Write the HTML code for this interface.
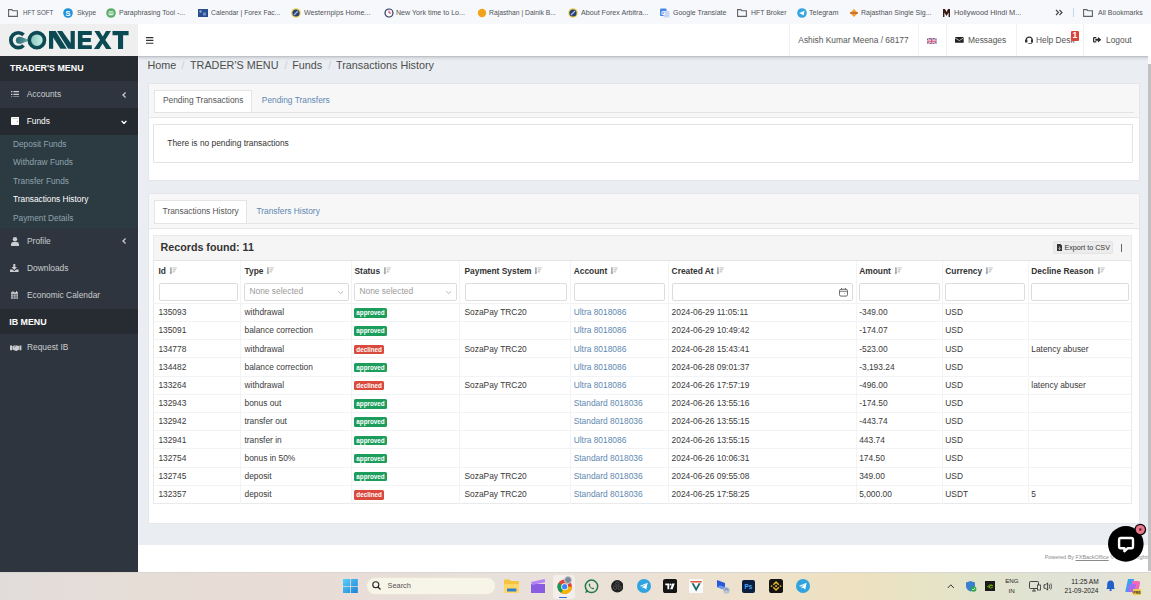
<!DOCTYPE html>
<html><head><meta charset="utf-8"><style>*{box-sizing:border-box;margin:0;padding:0}
html,body{width:1151px;height:600px;overflow:hidden}
body{position:relative;font-family:"Liberation Sans",sans-serif;background:#e9ecf0;color:#333}
.abs{position:absolute}
#bm{left:0;top:0;width:1151px;height:24px;background:#f7f8fc;color:#505357;font-size:7.4px;white-space:nowrap}
#bm span{position:absolute;top:8px;line-height:9px;transform-origin:0 50%}
#bm svg{position:absolute}
#logo{left:0;top:24px;width:138px;height:32px;background:#efefef}
#nav{left:138px;top:24px;width:1013px;height:32px;background:#fff;font-size:8.4px;color:#555}
#nav .it{position:absolute;top:0;height:32px;border-left:1px solid #eef0f2}
#side{left:0;top:56px;width:138px;height:516px;background:#2f353e;color:#c9cdd1;font-size:8.4px}
#content{left:138px;top:56px;width:1010px;height:489px;background:#e9ecf0}
#sb{left:1148px;top:56px;width:3px;height:516px;background:#fbfbfb}
#sbt{left:1148.4px;top:64px;width:2.6px;height:507px;background:#c1c1c1}
#footer{left:138px;top:545px;width:1010px;height:27px;background:#fff}
#task{left:0;top:572px;width:1151px;height:28px;background:linear-gradient(90deg,#e6dcd8 0%,#ece4dc 30%,#efe7d6 60%,#ede6d3 100%)}
</style></head><body>
<div id="bm" class="abs"><svg style="left:7.8px;top:8.5px" width="10" height="8" viewBox="0 0 10 8"><path d="M.6 .6h3.2l1 1.1h4.6v5.7H.6z" fill="none" stroke="#5f6368" stroke-width="1.1"/></svg><span style="left:22.6px;transform:scaleX(0.844)">HFT SOFT</span><svg style="left:63.4px;top:7.5px" width="10" height="10" viewBox="0 0 10 10"><circle cx="5" cy="5" r="4.8" fill="#1c92d8"/><text x="5" y="7.8" font-size="7.5" font-weight="bold" fill="#fff" text-anchor="middle" font-family="Liberation Sans">S</text></svg><span style="left:76.5px;transform:scaleX(0.929)">Skype</span><svg style="left:105.5px;top:7.5px" width="10" height="10" viewBox="0 0 10 10"><circle cx="5" cy="5" r="4.8" fill="#5cae6a"/><rect x="2.6" y="3.2" width="4.8" height="4" rx="1" fill="#e6f2e6"/><circle cx="4" cy="5" r=".7" fill="#3b8a4a"/><circle cx="6" cy="5" r=".7" fill="#3b8a4a"/></svg><span style="left:118.7px;transform:scaleX(0.944)">Paraphrasing Tool -...</span><svg style="left:198px;top:8px" width="10" height="9" viewBox="0 0 10 9"><rect x="0" y="1" width="10" height="8" fill="#2a4f8f"/><rect x="1.5" y="2.5" width="2" height="2" fill="#9bb7e0"/><rect x="5" y="4.5" width="3" height="3" fill="#6d8fc8"/></svg><span style="left:211px;transform:scaleX(0.920)">Calendar | Forex Fac...</span><svg style="left:291px;top:7.5px" width="10" height="10" viewBox="0 0 10 10"><circle cx="5" cy="5" r="4.8" fill="#e8d35a"/><circle cx="5" cy="5" r="3.6" fill="#2d3f6e"/><path d="M3 7 L7 3" stroke="#9fc0ef" stroke-width="1.2"/></svg><span style="left:303.5px;transform:scaleX(0.964)">Westernpips Home...</span><svg style="left:383.5px;top:7.5px" width="10" height="10" viewBox="0 0 10 10"><circle cx="5" cy="5" r="4" fill="none" stroke="#2f3a5a" stroke-width="1.2"/><path d="M5 2.6V5h2" fill="none" stroke="#d8344a" stroke-width="1"/></svg><span style="left:396px;transform:scaleX(0.959)">New York time to Lo...</span><svg style="left:476.5px;top:7.5px" width="10" height="10" viewBox="0 0 10 10"><circle cx="5" cy="5" r="4.2" fill="#f2a31b"/></svg><span style="left:489px;transform:scaleX(0.917)">Rajasthan | Dainik B...</span><svg style="left:567.5px;top:7.5px" width="10" height="10" viewBox="0 0 10 10"><circle cx="5" cy="5" r="4.8" fill="#e8d35a"/><circle cx="5" cy="5" r="3.6" fill="#2d3f6e"/><path d="M3 7 L7 3" stroke="#9fc0ef" stroke-width="1.2"/></svg><span style="left:581px;transform:scaleX(0.965)">About Forex Arbitra...</span><svg style="left:660px;top:7.5px" width="10" height="10" viewBox="0 0 10 10"><rect x="0" y="0.5" width="6.5" height="7.5" rx="1" fill="#4a86e8"/><rect x="3.5" y="3" width="6" height="6.5" rx="1" fill="#c6d7f5"/><text x="3.2" y="6.5" font-size="5.5" font-weight="bold" fill="#fff" text-anchor="middle" font-family="Liberation Sans">G</text></svg><span style="left:672.5px;transform:scaleX(0.949)">Google Translate</span><svg style="left:736.5px;top:8.5px" width="10" height="8" viewBox="0 0 10 8"><path d="M.6 .6h3.2l1 1.1h4.6v5.7H.6z" fill="none" stroke="#5f6368" stroke-width="1.1"/></svg><span style="left:751px;transform:scaleX(0.932)">HFT Broker</span><svg style="left:796.5px;top:7.5px" width="10" height="10" viewBox="0 0 10 10"><circle cx="5" cy="5" r="4.8" fill="#37a6de"/><path d="M2.2 5 L7.6 2.8 L6.6 7.6 L4.6 6.2 Z" fill="#fff"/></svg><span style="left:809px;transform:scaleX(0.969)">Telegram</span><svg style="left:849px;top:7.5px" width="10" height="10" viewBox="0 0 10 10"><path d="M5 1 L9 5 L5 9 L1 5Z" fill="#f0a030"/><rect x="1" y="4.3" width="8" height="1.4" fill="#c0602a"/></svg><span style="left:861px;transform:scaleX(0.942)">Rajasthan Single Sig...</span><svg style="left:941.5px;top:7.5px" width="9" height="10" viewBox="0 0 9 10"><path d="M1 1h2l1.5 3L6 1h2v8H6.6V4.5L4.5 8 2.4 4.5V9H1z" fill="#3a1a14"/></svg><span style="left:954px;transform:scaleX(1.001)">Hollywood Hindi M...</span><svg style="left:1055px;top:9px" width="9" height="7" viewBox="0 0 9 7"><path d="M1 1l2.5 2.5L1 6M4.5 1L7 3.5 4.5 6" fill="none" stroke="#3c4043" stroke-width="1.1"/></svg><div style="position:absolute;left:1072.5px;top:8px;width:1px;height:9px;background:#c8d4ea"></div><svg style="left:1082.9px;top:8.5px" width="10" height="8" viewBox="0 0 10 8"><path d="M.6 .6h3.2l1 1.1h4.6v5.7H.6z" fill="none" stroke="#5f6368" stroke-width="1.1"/></svg><span style="left:1097.9px;transform:scaleX(0.947)">All Bookmarks</span></div>
<div id="logo" class="abs"><svg width="138" height="32" viewBox="0 24 138 32" style="position:absolute;left:0;top:0">
<defs><linearGradient id="lg" gradientUnits="userSpaceOnUse" x1="15.5" x2="43" y1="0" y2="0"><stop offset="0" stop-color="#2a6a72"/><stop offset=".3" stop-color="#4d8d90"/><stop offset=".55" stop-color="#8cc7bf"/><stop offset="1" stop-color="#c4eee3"/></linearGradient></defs>
<path d="M23.57 34.93A7.45 7.45 0 1 0 23.57 45.47" fill="none" stroke="#0b4a53" stroke-width="3.7"/>
<circle cx="19.4" cy="40.2" r="3.5" fill="url(#lg)"/>
<path d="M19.4 36.7 C23.5 36.9 26 39.3 28.5 39.4 L33 37 L33 43.4 L28.5 41 C26 41.1 23.5 43.5 19.4 43.7Z" fill="url(#lg)"/>
<circle cx="36.9" cy="40.2" r="6" fill="url(#lg)"/>
<circle cx="36.9" cy="40.2" r="7.6" fill="none" stroke="#0b4a53" stroke-width="3.6"/>
<rect x="49" y="31" width="4.2" height="17.8" fill="#0b4a53"/>
<polygon points="49,31 55.6,31 66.8,48.8 60.4,48.8" fill="#0b4a53"/>
<polygon points="57,31 62.2,31 74.8,48.8 68.2,48.8" fill="#0b4a53"/>
<rect x="70.6" y="31" width="4.2" height="17.8" fill="#0b4a53"/>
<path d="M77.9 31.1H91.8V34.9H82.5V38H90.8V41.9H82.5V45.2H91.8V49H77.9Z" fill="#0b4a53"/>
<polygon points="94.4,31.1 99.4,31.1 102.8,36.6 106,31.1 110.9,31.1 105.3,39.9 111.6,49 106.1,49 102.6,43.4 99.2,49 93.9,49 100.1,39.9" fill="#0b4a53"/>
<path d="M112.5 31.1H128.6V35.2H123.1V49H118V35.2H112.5Z" fill="#0b4a53"/>
</svg></div>
<div id="nav" class="abs"><svg style="position:absolute;left:8.3px;top:13px" width="8" height="7" viewBox="0 0 8 7"><path d="M0 .6H7.4M0 3.4H7.4M0 6.2H7.4" stroke="#333" stroke-width="1.1"/></svg><div style="position:absolute;left:650.6px;top:0;width:1px;height:32px;background:#eff1f3"></div><div style="position:absolute;left:779.6px;top:0;width:1px;height:32px;background:#eff1f3"></div><div style="position:absolute;left:808.3px;top:0;width:1px;height:32px;background:#eff1f3"></div><div style="position:absolute;left:877.7px;top:0;width:1px;height:32px;background:#eff1f3"></div><div style="position:absolute;left:945.4px;top:0;width:1px;height:32px;background:#eff1f3"></div><span style="position:absolute;left:660.3px;top:12.00px;line-height:9.6px;white-space:nowrap">Ashish Kumar Meena / 68177</span><svg style="position:absolute;left:789.2px;top:13.6px" width="9.5" height="6.5" viewBox="0 0 60 40"><rect width="60" height="40" fill="#3b4b9a"/><path d="M0 0L60 40M60 0L0 40" stroke="#fff" stroke-width="8"/><path d="M0 0L60 40M60 0L0 40" stroke="#d9456a" stroke-width="3"/><path d="M30 0V40M0 20H60" stroke="#fff" stroke-width="12"/><path d="M30 0V40M0 20H60" stroke="#d9456a" stroke-width="7"/></svg><svg style="position:absolute;left:817.4px;top:13.1px" width="8.7" height="5.8" viewBox="0 0 8.7 5.8"><rect width="8.7" height="5.8" rx=".5" fill="#222"/><path d="M0 .8L4.35 3.6L8.7 .8" fill="none" stroke="#fff" stroke-width=".7"/></svg><span style="position:absolute;left:830.0px;top:12.00px;line-height:9.6px;white-space:nowrap">Messages</span><svg style="position:absolute;left:887.1px;top:11.9px" width="8.4" height="8.4" viewBox="0 0 16 16"><path d="M2.2 9.5V7.8A5.8 5.8 0 0 1 13.8 7.8V9.5" fill="none" stroke="#333" stroke-width="2.2"/><path d="M0 8.5Q0 6.8 1.8 6.8H4.6V12.6H1.8Q0 12.6 0 10.9Z M16 8.5Q16 6.8 14.2 6.8H11.4V12.6H14.2Q16 12.6 16 10.9Z" fill="#333"/><path d="M13.6 12Q13.2 15 9.5 15H7.5" fill="none" stroke="#333" stroke-width="1.6"/><rect x="6" y="13.8" width="3.4" height="2.2" rx="1" fill="#333"/></svg><span style="position:absolute;left:898.0px;top:12.00px;line-height:9.6px;white-space:nowrap">Help Desk</span><div style="position:absolute;left:933.2px;top:7.2px;width:7.4px;height:9.4px;background:#d8453b;border-radius:1px;color:#fff;font-weight:bold;font-size:8.6px;line-height:9.8px;text-align:center">1</div><svg style="position:absolute;left:954.7px;top:13.3px" width="8.6" height="5.6" viewBox="0 0 17 11"><path d="M6.5 1.2H2.6Q1.2 1.2 1.2 2.6V8.4Q1.2 9.8 2.6 9.8H6.5" fill="none" stroke="#2a2a2a" stroke-width="2.4"/><path d="M4.6 3.6H9.8V0L16.6 5.5L9.8 11V7.4H4.6Z" fill="#2a2a2a"/></svg><span style="position:absolute;left:968.0px;top:12.00px;line-height:9.6px;white-space:nowrap">Logout</span></div>
<div id="side" class="abs"><div style="position:absolute;left:0;top:0;width:138px;height:25px;background:#272b32"></div><span style="position:absolute;left:10px;top:7.15px;line-height:10.23px;font-size:8.9px;color:#fff;white-space:nowrap;font-weight:bold">TRADER'S MENU</span><svg style="position:absolute;left:10.8px;top:34.8px" width="8.4" height="6.7" viewBox="0 0 8.4 6.7"><path d="M0 .7H1.4M2.4 .7H8.4M0 3.35H1.4M2.4 3.35H8.4M0 6H1.4M2.4 6H8.4" stroke="#c9cdd1" stroke-width="1.15"/></svg><span style="position:absolute;left:26.7px;top:34.10px;line-height:9.66px;font-size:8.4px;color:#c9cdd1;white-space:nowrap">Accounts</span><svg style="position:absolute;left:121.8px;top:35.5px" width="4.5" height="6" viewBox="0 0 4.5 6"><path d="M3.6 .6L1 3L3.6 5.4" fill="none" stroke="#c9cdd1" stroke-width="1.3"/></svg><div style="position:absolute;left:0;top:52.0px;width:138px;height:27px;background:#252a30"></div><svg style="position:absolute;left:10.8px;top:61.0px" width="8.4" height="7.9" viewBox="0 0 8.4 7.9"><rect x="0" y="0" width="8.4" height="7.9" rx=".9" fill="#fff"/><rect x=".9" y="1.1" width="6.6" height=".8" fill="#c9c9c9"/><circle cx="6.6" cy="4.6" r=".5" fill="#888"/></svg><span style="position:absolute;left:26.7px;top:61.00px;line-height:9.66px;font-size:8.4px;color:#fff;white-space:nowrap">Funds</span><svg style="position:absolute;left:121px;top:63.5px" width="6" height="4.5" viewBox="0 0 6 4.5"><path d="M.6 .9L3 3.5L5.4 .9" fill="none" stroke="#fff" stroke-width="1.4"/></svg><div style="position:absolute;left:0;top:79.0px;width:138px;height:93.2px;background:#2c3a42"></div><span style="position:absolute;left:13px;top:83.69px;line-height:9.54px;font-size:8.3px;color:#8fa4ad;white-space:nowrap">Deposit Funds</span><span style="position:absolute;left:13px;top:102.29px;line-height:9.54px;font-size:8.3px;color:#8fa4ad;white-space:nowrap">Withdraw Funds</span><span style="position:absolute;left:13px;top:120.69px;line-height:9.54px;font-size:8.3px;color:#8fa4ad;white-space:nowrap">Transfer Funds</span><span style="position:absolute;left:13px;top:139.29px;line-height:9.54px;font-size:8.3px;color:#fff;white-space:nowrap">Transactions History</span><span style="position:absolute;left:13px;top:157.79px;line-height:9.54px;font-size:8.3px;color:#8fa4ad;white-space:nowrap">Payment Details</span><svg style="position:absolute;left:10.6px;top:181.0px" width="8" height="9" viewBox="0 0 8 9"><circle cx="4" cy="2.3" r="2.2" fill="#c9cdd1"/><path d="M0 9V7.2Q0 4.9 2.3 4.9H5.7Q8 4.9 8 7.2V9Z" fill="#c9cdd1"/></svg><span style="position:absolute;left:27px;top:180.90px;line-height:9.66px;font-size:8.4px;color:#c9cdd1;white-space:nowrap">Profile</span><svg style="position:absolute;left:121.8px;top:182.3px" width="4.5" height="6" viewBox="0 0 4.5 6"><path d="M3.6 .6L1 3L3.6 5.4" fill="none" stroke="#c9cdd1" stroke-width="1.3"/></svg><svg style="position:absolute;left:10.4px;top:207.6px" width="8.6" height="8.8" viewBox="0 0 8.6 8.8"><path d="M3.3 0H5.3V3H7L4.3 5.9L1.6 3H3.3Z" fill="#c9cdd1"/><path d="M0 5.6H2.6L4.3 7.3L6 5.6H8.6V8.8H0Z" fill="#c9cdd1"/></svg><span style="position:absolute;left:27px;top:207.80px;line-height:9.66px;font-size:8.4px;color:#c9cdd1;white-space:nowrap">Downloads</span><svg style="position:absolute;left:11.1px;top:234.7px" width="7.4" height="8.8" viewBox="0 0 7.4 8.8"><rect x="0" y="1.2" width="7.4" height="7.6" fill="#c9cdd1"/><rect x="1.4" y="0" width="1" height="2" fill="#c9cdd1"/><rect x="5" y="0" width="1" height="2" fill="#c9cdd1"/><path d="M0 3.3H7.4M0 5.2H7.4M0 7H7.4M2.4 3V8.8M5 3V8.8" stroke="#2f353e" stroke-width=".55"/></svg><span style="position:absolute;left:27px;top:235.10px;line-height:9.66px;font-size:8.4px;color:#c9cdd1;white-space:nowrap">Economic Calendar</span><div style="position:absolute;left:0;top:252.8px;width:138px;height:25.5px;background:#272b32"></div><span style="position:absolute;left:9.2px;top:260.65px;line-height:10.23px;font-size:8.9px;color:#fff;white-space:nowrap;font-weight:bold">IB MENU</span><svg style="position:absolute;left:10.4px;top:289.0px" width="11.4" height="6" viewBox="0 0 11.4 6"><path d="M0 .6H2V5.2H0Z M9.4 .6H11.4V5.2H9.4Z" fill="#c9cdd1"/><path d="M2.4 1Q4 0 5.7 .6Q7.4 0 9 1V4.6L6.6 6L4.8 5.4L2.4 4.6Z" fill="#c9cdd1"/><path d="M4 2.2L5.6 1.4" stroke="#2f353e" stroke-width=".6"/></svg><span style="position:absolute;left:27px;top:287.20px;line-height:9.66px;font-size:8.4px;color:#c9cdd1;white-space:nowrap">Request IB</span></div>
<div style="position:absolute;left:138px;top:56px;width:1010.00px;height:489.00px;background:#eaedf1"></div>
<div style="position:absolute;left:138px;top:56px;width:1.30px;height:489.00px;background:#f4f6f9"></div>
<div style="position:absolute;left:138px;top:56px;width:1010.00px;height:5.00px;background:linear-gradient(rgba(60,62,70,.30),rgba(60,62,70,.13) 30%,rgba(60,62,70,.04) 65%,rgba(60,62,70,0))"></div>
<div style="position:absolute;left:147.4px;top:59.23px;line-height:12.06px;font-size:10.8px;color:#4d4d4d;white-space:nowrap;">Home</div>
<div style="position:absolute;left:181.5px;top:59.23px;line-height:12.06px;font-size:10.8px;color:#cfcfcf;white-space:nowrap;">/</div>
<div style="position:absolute;left:190px;top:59.23px;line-height:12.06px;font-size:10.8px;color:#4d4d4d;white-space:nowrap;">TRADER'S MENU</div>
<div style="position:absolute;left:284.4px;top:59.23px;line-height:12.06px;font-size:10.8px;color:#cfcfcf;white-space:nowrap;">/</div>
<div style="position:absolute;left:292.2px;top:59.23px;line-height:12.06px;font-size:10.8px;color:#4d4d4d;white-space:nowrap;">Funds</div>
<div style="position:absolute;left:328.3px;top:59.23px;line-height:12.06px;font-size:10.8px;color:#cfcfcf;white-space:nowrap;">/</div>
<div style="position:absolute;left:336px;top:59.23px;line-height:12.06px;font-size:10.8px;color:#4d4d4d;white-space:nowrap;">Transactions History</div>
<div style="position:absolute;left:148px;top:83px;width:991.60px;height:98.00px;background:#fff;border:1px solid #e4e6e9"></div>
<div style="position:absolute;left:149px;top:84px;width:989.60px;height:33.30px;background:#f7f7f8"></div>
<div style="position:absolute;left:149px;top:117.3px;width:989.60px;height:1.00px;background:#e6e7e9"></div>
<div style="position:absolute;left:153.5px;top:111.5px;width:980.90px;height:1.00px;background:#e3e4e6"></div>
<div style="position:absolute;left:153.5px;top:89.6px;width:98.70px;height:22.90px;background:#fff;border:1px solid #e3e4e6;border-bottom:none;border-radius:1px 1px 0 0"></div>
<div style="position:absolute;left:162.9px;top:95.90px;line-height:9.38px;font-size:8.4px;color:#555;white-space:nowrap;">Pending Transactions</div>
<div style="position:absolute;left:261.8px;top:95.90px;line-height:9.38px;font-size:8.4px;color:#5e88b1;white-space:nowrap;">Pending Transfers</div>
<div style="position:absolute;left:153.3px;top:124.4px;width:979.40px;height:38.50px;background:#fff;border:1px solid #e2e3e5;border-radius:1px"></div>
<div style="position:absolute;left:167.3px;top:138.90px;line-height:9.38px;font-size:8.4px;color:#333;white-space:nowrap;">There is no pending transactions</div>
<div style="position:absolute;left:148px;top:193.2px;width:991.60px;height:330.80px;background:#fff;border:1px solid #e4e6e9"></div>
<div style="position:absolute;left:149px;top:194.2px;width:989.60px;height:33.80px;background:#f7f7f8"></div>
<div style="position:absolute;left:149px;top:228px;width:989.60px;height:1.00px;background:#e6e7e9"></div>
<div style="position:absolute;left:153.5px;top:222.5px;width:980.90px;height:1.00px;background:#e3e4e6"></div>
<div style="position:absolute;left:153.5px;top:200.3px;width:93.80px;height:23.20px;background:#fff;border:1px solid #e3e4e6;border-bottom:none;border-radius:1px 1px 0 0"></div>
<div style="position:absolute;left:162.6px;top:206.70px;line-height:9.38px;font-size:8.4px;color:#555;white-space:nowrap;">Transactions History</div>
<div style="position:absolute;left:256.4px;top:206.70px;line-height:9.38px;font-size:8.4px;color:#5e88b1;white-space:nowrap;">Transfers History</div>
<div style="position:absolute;left:153.4px;top:235px;width:978.80px;height:269.40px;background:#fff;border:1px solid #e9eaeb"></div>
<div style="position:absolute;left:154.4px;top:236px;width:976.80px;height:25.00px;background:#f5f5f6;border-bottom:1px solid #e3e4e6"></div>
<div style="position:absolute;left:160.6px;top:241.52px;line-height:11.95px;font-size:10.7px;color:#333;white-space:nowrap;font-weight:bold;">Records found: 11</div>
<div style="position:absolute;left:1053.3px;top:241.3px;width:59.60px;height:12.90px;background:#ececed;border:1px solid #e4e4e4;border-radius:2px"></div>
<svg style="position:absolute;left:1056.8px;top:243.6px" width="5.2" height="7" viewBox="0 0 5.2 7"><path d="M0 0H3.4L5.2 1.8V7H0Z" fill="#333"/><path d="M2.6 2.6V5.4M1.5 4.4L2.6 5.6L3.7 4.4" fill="none" stroke="#fff" stroke-width=".6"/></svg>
<div style="position:absolute;left:1064.4px;top:244.08px;line-height:8.04px;font-size:7.2px;color:#333;white-space:nowrap;">Export to CSV</div>
<div style="position:absolute;left:1120.7px;top:244.4px;width:1.20px;height:7.30px;background:#666"></div>
<div style="position:absolute;left:240.2px;top:261px;width:1.00px;height:242.80px;background:#f2f3f4"></div>
<div style="position:absolute;left:351.1px;top:261px;width:1.00px;height:242.80px;background:#f2f3f4"></div>
<div style="position:absolute;left:459.2px;top:261px;width:1.00px;height:242.80px;background:#f2f3f4"></div>
<div style="position:absolute;left:569.5px;top:261px;width:1.00px;height:242.80px;background:#f2f3f4"></div>
<div style="position:absolute;left:667.7px;top:261px;width:1.00px;height:242.80px;background:#f2f3f4"></div>
<div style="position:absolute;left:855.9px;top:261px;width:1.00px;height:242.80px;background:#f2f3f4"></div>
<div style="position:absolute;left:942.1px;top:261px;width:1.00px;height:242.80px;background:#f2f3f4"></div>
<div style="position:absolute;left:1027.7px;top:261px;width:1.00px;height:242.80px;background:#f2f3f4"></div>
<div style="position:absolute;left:158.4px;top:267.10px;line-height:9.38px;font-size:8.4px;color:#333;white-space:nowrap;font-weight:bold;">Id</div>
<svg style="position:absolute;left:168.5px;top:267px" width="8.5" height="7.6" viewBox="0 0 8.5 7.6"><path d="M1.9 0.2V6.8" stroke="#a5a5a5" stroke-width="1.6"/><path d="M.4 5.6L1.9 7.5L3.4 5.6Z" fill="#a5a5a5"/><path d="M3.6 .2H8.3L7.6 1.6H3.6ZM3.6 2.1H7.3L6.7 3.5H3.6ZM3.6 4H6.3L5.8 5.4H3.6Z" fill="#cfcfcf"/></svg>
<div style="position:absolute;left:244.5px;top:267.10px;line-height:9.38px;font-size:8.4px;color:#333;white-space:nowrap;font-weight:bold;">Type</div>
<svg style="position:absolute;left:266.1px;top:267px" width="8.5" height="7.6" viewBox="0 0 8.5 7.6"><path d="M1.9 0.2V6.8" stroke="#a5a5a5" stroke-width="1.6"/><path d="M.4 5.6L1.9 7.5L3.4 5.6Z" fill="#a5a5a5"/><path d="M3.6 .2H8.3L7.6 1.6H3.6ZM3.6 2.1H7.3L6.7 3.5H3.6ZM3.6 4H6.3L5.8 5.4H3.6Z" fill="#cfcfcf"/></svg>
<div style="position:absolute;left:354.5px;top:267.10px;line-height:9.38px;font-size:8.4px;color:#333;white-space:nowrap;font-weight:bold;">Status</div>
<svg style="position:absolute;left:382.8px;top:267px" width="8.5" height="7.6" viewBox="0 0 8.5 7.6"><path d="M1.9 0.2V6.8" stroke="#a5a5a5" stroke-width="1.6"/><path d="M.4 5.6L1.9 7.5L3.4 5.6Z" fill="#a5a5a5"/><path d="M3.6 .2H8.3L7.6 1.6H3.6ZM3.6 2.1H7.3L6.7 3.5H3.6ZM3.6 4H6.3L5.8 5.4H3.6Z" fill="#cfcfcf"/></svg>
<div style="position:absolute;left:464.5px;top:267.10px;line-height:9.38px;font-size:8.4px;color:#333;white-space:nowrap;font-weight:bold;">Payment System</div>
<svg style="position:absolute;left:534.3px;top:267px" width="8.5" height="7.6" viewBox="0 0 8.5 7.6"><path d="M1.9 0.2V6.8" stroke="#a5a5a5" stroke-width="1.6"/><path d="M.4 5.6L1.9 7.5L3.4 5.6Z" fill="#a5a5a5"/><path d="M3.6 .2H8.3L7.6 1.6H3.6ZM3.6 2.1H7.3L6.7 3.5H3.6ZM3.6 4H6.3L5.8 5.4H3.6Z" fill="#cfcfcf"/></svg>
<div style="position:absolute;left:573.7px;top:267.10px;line-height:9.38px;font-size:8.4px;color:#333;white-space:nowrap;font-weight:bold;">Account</div>
<svg style="position:absolute;left:609.9px;top:267px" width="8.5" height="7.6" viewBox="0 0 8.5 7.6"><path d="M1.9 0.2V6.8" stroke="#a5a5a5" stroke-width="1.6"/><path d="M.4 5.6L1.9 7.5L3.4 5.6Z" fill="#a5a5a5"/><path d="M3.6 .2H8.3L7.6 1.6H3.6ZM3.6 2.1H7.3L6.7 3.5H3.6ZM3.6 4H6.3L5.8 5.4H3.6Z" fill="#cfcfcf"/></svg>
<div style="position:absolute;left:671.6px;top:267.10px;line-height:9.38px;font-size:8.4px;color:#333;white-space:nowrap;font-weight:bold;">Created At</div>
<svg style="position:absolute;left:716.4px;top:267px" width="8.5" height="7.6" viewBox="0 0 8.5 7.6"><path d="M1.9 0.2V6.8" stroke="#a5a5a5" stroke-width="1.6"/><path d="M.4 5.6L1.9 7.5L3.4 5.6Z" fill="#a5a5a5"/><path d="M3.6 .2H8.3L7.6 1.6H3.6ZM3.6 2.1H7.3L6.7 3.5H3.6ZM3.6 4H6.3L5.8 5.4H3.6Z" fill="#cfcfcf"/></svg>
<div style="position:absolute;left:859.2px;top:267.10px;line-height:9.38px;font-size:8.4px;color:#333;white-space:nowrap;font-weight:bold;">Amount</div>
<svg style="position:absolute;left:893.5px;top:267px" width="8.5" height="7.6" viewBox="0 0 8.5 7.6"><path d="M1.9 0.2V6.8" stroke="#a5a5a5" stroke-width="1.6"/><path d="M.4 5.6L1.9 7.5L3.4 5.6Z" fill="#a5a5a5"/><path d="M3.6 .2H8.3L7.6 1.6H3.6ZM3.6 2.1H7.3L6.7 3.5H3.6ZM3.6 4H6.3L5.8 5.4H3.6Z" fill="#cfcfcf"/></svg>
<div style="position:absolute;left:945.3px;top:267.10px;line-height:9.38px;font-size:8.4px;color:#333;white-space:nowrap;font-weight:bold;">Currency</div>
<svg style="position:absolute;left:984.8px;top:267px" width="8.5" height="7.6" viewBox="0 0 8.5 7.6"><path d="M1.9 0.2V6.8" stroke="#a5a5a5" stroke-width="1.6"/><path d="M.4 5.6L1.9 7.5L3.4 5.6Z" fill="#a5a5a5"/><path d="M3.6 .2H8.3L7.6 1.6H3.6ZM3.6 2.1H7.3L6.7 3.5H3.6ZM3.6 4H6.3L5.8 5.4H3.6Z" fill="#cfcfcf"/></svg>
<div style="position:absolute;left:1031.3px;top:267.10px;line-height:9.38px;font-size:8.4px;color:#333;white-space:nowrap;font-weight:bold;">Decline Reason</div>
<svg style="position:absolute;left:1096.5px;top:267px" width="8.5" height="7.6" viewBox="0 0 8.5 7.6"><path d="M1.9 0.2V6.8" stroke="#a5a5a5" stroke-width="1.6"/><path d="M.4 5.6L1.9 7.5L3.4 5.6Z" fill="#a5a5a5"/><path d="M3.6 .2H8.3L7.6 1.6H3.6ZM3.6 2.1H7.3L6.7 3.5H3.6ZM3.6 4H6.3L5.8 5.4H3.6Z" fill="#cfcfcf"/></svg>
<div style="position:absolute;left:158.5px;top:283.4px;width:79.30px;height:17.20px;background:#fff;border:1px solid #dcdcdc;border-radius:2px"></div>
<div style="position:absolute;left:243.6px;top:283.4px;width:105.00px;height:17.20px;background:#fff;border:1px solid #dcdcdc;border-radius:2px"></div>
<div style="position:absolute;left:249.5px;top:287.40px;line-height:9.38px;font-size:8.4px;color:#9a9a9a;white-space:nowrap;">None selected</div>
<svg style="position:absolute;left:338.2px;top:291px" width="5.4" height="3" viewBox="0 0 5.4 3"><path d="M.3 .3L2.7 2.6L5.1 .3" fill="none" stroke="#999" stroke-width=".7"/></svg>
<div style="position:absolute;left:353.6px;top:283.4px;width:103.10px;height:17.20px;background:#fff;border:1px solid #dcdcdc;border-radius:2px"></div>
<div style="position:absolute;left:359.5px;top:287.40px;line-height:9.38px;font-size:8.4px;color:#9a9a9a;white-space:nowrap;">None selected</div>
<svg style="position:absolute;left:446.3px;top:291px" width="5.4" height="3" viewBox="0 0 5.4 3"><path d="M.3 .3L2.7 2.6L5.1 .3" fill="none" stroke="#999" stroke-width=".7"/></svg>
<div style="position:absolute;left:464.5px;top:283.4px;width:102.50px;height:17.20px;background:#fff;border:1px solid #dcdcdc;border-radius:2px"></div>
<div style="position:absolute;left:573.7px;top:283.4px;width:91.50px;height:17.20px;background:#fff;border:1px solid #dcdcdc;border-radius:2px"></div>
<div style="position:absolute;left:671.6px;top:283.4px;width:181.80px;height:17.20px;background:#fff;border:1px solid #dcdcdc;border-radius:2px"></div>
<svg style="position:absolute;left:839px;top:288.2px" width="9" height="8.6" viewBox="0 0 9 8.6"><rect x=".5" y="1.3" width="8" height="6.8" rx="1.4" fill="none" stroke="#6a6a6a" stroke-width="1"/><path d="M.5 3.3H8.5" stroke="#6a6a6a" stroke-width=".9"/><path d="M2.6 0V2M6.4 0V2" stroke="#6a6a6a" stroke-width="1"/><path d="M5 5.3H6.3" stroke="#9a9a9a" stroke-width=".6"/></svg>
<div style="position:absolute;left:859.2px;top:283.4px;width:80.40px;height:17.20px;background:#fff;border:1px solid #dcdcdc;border-radius:2px"></div>
<div style="position:absolute;left:945.3px;top:283.4px;width:79.90px;height:17.20px;background:#fff;border:1px solid #dcdcdc;border-radius:2px"></div>
<div style="position:absolute;left:1031.3px;top:283.4px;width:97.90px;height:17.20px;background:#fff;border:1px solid #dcdcdc;border-radius:2px"></div>
<div style="position:absolute;left:154.4px;top:302.7px;width:976.80px;height:1.00px;background:#f2f3f4"></div>
<div style="position:absolute;left:158.4px;top:308.10px;line-height:9.38px;font-size:8.4px;color:#3a3a3a;white-space:nowrap;">135093</div>
<div style="position:absolute;left:244.5px;top:308.10px;line-height:9.38px;font-size:8.4px;color:#3a3a3a;white-space:nowrap;">withdrawal</div>
<div style="position:absolute;left:353.9px;top:308.20px;width:33.3px;height:9.4px;background:#1d9d5c;border-radius:1.6px;color:#fff;font-weight:bold;font-size:6.3px;line-height:9.4px;text-align:center">approved</div>
<div style="position:absolute;left:464.5px;top:308.10px;line-height:9.38px;font-size:8.4px;color:#3a3a3a;white-space:nowrap;">SozaPay TRC20</div>
<div style="position:absolute;left:573.7px;top:308.10px;line-height:9.38px;font-size:8.4px;color:#5e88b1;white-space:nowrap;">Ultra 8018086</div>
<div style="position:absolute;left:671.6px;top:308.10px;line-height:9.38px;font-size:8.4px;color:#3a3a3a;white-space:nowrap;">2024-06-29 11:05:11</div>
<div style="position:absolute;left:859.2px;top:308.10px;line-height:9.38px;font-size:8.4px;color:#3a3a3a;white-space:nowrap;">-349.00</div>
<div style="position:absolute;left:945.3px;top:308.10px;line-height:9.38px;font-size:8.4px;color:#3a3a3a;white-space:nowrap;">USD</div>
<div style="position:absolute;left:154.4px;top:320.9px;width:976.80px;height:1.00px;background:#f2f3f4"></div>
<div style="position:absolute;left:158.4px;top:326.30px;line-height:9.38px;font-size:8.4px;color:#3a3a3a;white-space:nowrap;">135091</div>
<div style="position:absolute;left:244.5px;top:326.30px;line-height:9.38px;font-size:8.4px;color:#3a3a3a;white-space:nowrap;">balance correction</div>
<div style="position:absolute;left:353.9px;top:326.40px;width:33.3px;height:9.4px;background:#1d9d5c;border-radius:1.6px;color:#fff;font-weight:bold;font-size:6.3px;line-height:9.4px;text-align:center">approved</div>
<div style="position:absolute;left:573.7px;top:326.30px;line-height:9.38px;font-size:8.4px;color:#5e88b1;white-space:nowrap;">Ultra 8018086</div>
<div style="position:absolute;left:671.6px;top:326.30px;line-height:9.38px;font-size:8.4px;color:#3a3a3a;white-space:nowrap;">2024-06-29 10:49:42</div>
<div style="position:absolute;left:859.2px;top:326.30px;line-height:9.38px;font-size:8.4px;color:#3a3a3a;white-space:nowrap;">-174.07</div>
<div style="position:absolute;left:945.3px;top:326.30px;line-height:9.38px;font-size:8.4px;color:#3a3a3a;white-space:nowrap;">USD</div>
<div style="position:absolute;left:154.4px;top:339.09999999999997px;width:976.80px;height:1.00px;background:#f2f3f4"></div>
<div style="position:absolute;left:158.4px;top:344.50px;line-height:9.38px;font-size:8.4px;color:#3a3a3a;white-space:nowrap;">134778</div>
<div style="position:absolute;left:244.5px;top:344.50px;line-height:9.38px;font-size:8.4px;color:#3a3a3a;white-space:nowrap;">withdrawal</div>
<div style="position:absolute;left:353.9px;top:344.60px;width:30.4px;height:9.4px;background:#d9493c;border-radius:1.6px;color:#fff;font-weight:bold;font-size:6.3px;line-height:9.4px;text-align:center">declined</div>
<div style="position:absolute;left:464.5px;top:344.50px;line-height:9.38px;font-size:8.4px;color:#3a3a3a;white-space:nowrap;">SozaPay TRC20</div>
<div style="position:absolute;left:573.7px;top:344.50px;line-height:9.38px;font-size:8.4px;color:#5e88b1;white-space:nowrap;">Ultra 8018086</div>
<div style="position:absolute;left:671.6px;top:344.50px;line-height:9.38px;font-size:8.4px;color:#3a3a3a;white-space:nowrap;">2024-06-28 15:43:41</div>
<div style="position:absolute;left:859.2px;top:344.50px;line-height:9.38px;font-size:8.4px;color:#3a3a3a;white-space:nowrap;">-523.00</div>
<div style="position:absolute;left:945.3px;top:344.50px;line-height:9.38px;font-size:8.4px;color:#3a3a3a;white-space:nowrap;">USD</div>
<div style="position:absolute;left:1031.3px;top:344.50px;line-height:9.38px;font-size:8.4px;color:#3a3a3a;white-space:nowrap;">Latency abuser</div>
<div style="position:absolute;left:154.4px;top:357.29999999999995px;width:976.80px;height:1.00px;background:#f2f3f4"></div>
<div style="position:absolute;left:158.4px;top:362.70px;line-height:9.38px;font-size:8.4px;color:#3a3a3a;white-space:nowrap;">134482</div>
<div style="position:absolute;left:244.5px;top:362.70px;line-height:9.38px;font-size:8.4px;color:#3a3a3a;white-space:nowrap;">balance correction</div>
<div style="position:absolute;left:353.9px;top:362.80px;width:33.3px;height:9.4px;background:#1d9d5c;border-radius:1.6px;color:#fff;font-weight:bold;font-size:6.3px;line-height:9.4px;text-align:center">approved</div>
<div style="position:absolute;left:573.7px;top:362.70px;line-height:9.38px;font-size:8.4px;color:#5e88b1;white-space:nowrap;">Ultra 8018086</div>
<div style="position:absolute;left:671.6px;top:362.70px;line-height:9.38px;font-size:8.4px;color:#3a3a3a;white-space:nowrap;">2024-06-28 09:01:37</div>
<div style="position:absolute;left:859.2px;top:362.70px;line-height:9.38px;font-size:8.4px;color:#3a3a3a;white-space:nowrap;">-3,193.24</div>
<div style="position:absolute;left:945.3px;top:362.70px;line-height:9.38px;font-size:8.4px;color:#3a3a3a;white-space:nowrap;">USD</div>
<div style="position:absolute;left:154.4px;top:375.5px;width:976.80px;height:1.00px;background:#f2f3f4"></div>
<div style="position:absolute;left:158.4px;top:380.90px;line-height:9.38px;font-size:8.4px;color:#3a3a3a;white-space:nowrap;">133264</div>
<div style="position:absolute;left:244.5px;top:380.90px;line-height:9.38px;font-size:8.4px;color:#3a3a3a;white-space:nowrap;">withdrawal</div>
<div style="position:absolute;left:353.9px;top:381.00px;width:30.4px;height:9.4px;background:#d9493c;border-radius:1.6px;color:#fff;font-weight:bold;font-size:6.3px;line-height:9.4px;text-align:center">declined</div>
<div style="position:absolute;left:464.5px;top:380.90px;line-height:9.38px;font-size:8.4px;color:#3a3a3a;white-space:nowrap;">SozaPay TRC20</div>
<div style="position:absolute;left:573.7px;top:380.90px;line-height:9.38px;font-size:8.4px;color:#5e88b1;white-space:nowrap;">Ultra 8018086</div>
<div style="position:absolute;left:671.6px;top:380.90px;line-height:9.38px;font-size:8.4px;color:#3a3a3a;white-space:nowrap;">2024-06-26 17:57:19</div>
<div style="position:absolute;left:859.2px;top:380.90px;line-height:9.38px;font-size:8.4px;color:#3a3a3a;white-space:nowrap;">-496.00</div>
<div style="position:absolute;left:945.3px;top:380.90px;line-height:9.38px;font-size:8.4px;color:#3a3a3a;white-space:nowrap;">USD</div>
<div style="position:absolute;left:1031.3px;top:380.90px;line-height:9.38px;font-size:8.4px;color:#3a3a3a;white-space:nowrap;">latency abuser</div>
<div style="position:absolute;left:154.4px;top:393.7px;width:976.80px;height:1.00px;background:#f2f3f4"></div>
<div style="position:absolute;left:158.4px;top:399.10px;line-height:9.38px;font-size:8.4px;color:#3a3a3a;white-space:nowrap;">132943</div>
<div style="position:absolute;left:244.5px;top:399.10px;line-height:9.38px;font-size:8.4px;color:#3a3a3a;white-space:nowrap;">bonus out</div>
<div style="position:absolute;left:353.9px;top:399.20px;width:33.3px;height:9.4px;background:#1d9d5c;border-radius:1.6px;color:#fff;font-weight:bold;font-size:6.3px;line-height:9.4px;text-align:center">approved</div>
<div style="position:absolute;left:573.7px;top:399.10px;line-height:9.38px;font-size:8.4px;color:#5e88b1;white-space:nowrap;">Standard 8018036</div>
<div style="position:absolute;left:671.6px;top:399.10px;line-height:9.38px;font-size:8.4px;color:#3a3a3a;white-space:nowrap;">2024-06-26 13:55:16</div>
<div style="position:absolute;left:859.2px;top:399.10px;line-height:9.38px;font-size:8.4px;color:#3a3a3a;white-space:nowrap;">-174.50</div>
<div style="position:absolute;left:945.3px;top:399.10px;line-height:9.38px;font-size:8.4px;color:#3a3a3a;white-space:nowrap;">USD</div>
<div style="position:absolute;left:154.4px;top:411.9px;width:976.80px;height:1.00px;background:#f2f3f4"></div>
<div style="position:absolute;left:158.4px;top:417.30px;line-height:9.38px;font-size:8.4px;color:#3a3a3a;white-space:nowrap;">132942</div>
<div style="position:absolute;left:244.5px;top:417.30px;line-height:9.38px;font-size:8.4px;color:#3a3a3a;white-space:nowrap;">transfer out</div>
<div style="position:absolute;left:353.9px;top:417.40px;width:33.3px;height:9.4px;background:#1d9d5c;border-radius:1.6px;color:#fff;font-weight:bold;font-size:6.3px;line-height:9.4px;text-align:center">approved</div>
<div style="position:absolute;left:573.7px;top:417.30px;line-height:9.38px;font-size:8.4px;color:#5e88b1;white-space:nowrap;">Standard 8018036</div>
<div style="position:absolute;left:671.6px;top:417.30px;line-height:9.38px;font-size:8.4px;color:#3a3a3a;white-space:nowrap;">2024-06-26 13:55:15</div>
<div style="position:absolute;left:859.2px;top:417.30px;line-height:9.38px;font-size:8.4px;color:#3a3a3a;white-space:nowrap;">-443.74</div>
<div style="position:absolute;left:945.3px;top:417.30px;line-height:9.38px;font-size:8.4px;color:#3a3a3a;white-space:nowrap;">USD</div>
<div style="position:absolute;left:154.4px;top:430.09999999999997px;width:976.80px;height:1.00px;background:#f2f3f4"></div>
<div style="position:absolute;left:158.4px;top:435.50px;line-height:9.38px;font-size:8.4px;color:#3a3a3a;white-space:nowrap;">132941</div>
<div style="position:absolute;left:244.5px;top:435.50px;line-height:9.38px;font-size:8.4px;color:#3a3a3a;white-space:nowrap;">transfer in</div>
<div style="position:absolute;left:353.9px;top:435.60px;width:33.3px;height:9.4px;background:#1d9d5c;border-radius:1.6px;color:#fff;font-weight:bold;font-size:6.3px;line-height:9.4px;text-align:center">approved</div>
<div style="position:absolute;left:573.7px;top:435.50px;line-height:9.38px;font-size:8.4px;color:#5e88b1;white-space:nowrap;">Ultra 8018086</div>
<div style="position:absolute;left:671.6px;top:435.50px;line-height:9.38px;font-size:8.4px;color:#3a3a3a;white-space:nowrap;">2024-06-26 13:55:15</div>
<div style="position:absolute;left:859.2px;top:435.50px;line-height:9.38px;font-size:8.4px;color:#3a3a3a;white-space:nowrap;">443.74</div>
<div style="position:absolute;left:945.3px;top:435.50px;line-height:9.38px;font-size:8.4px;color:#3a3a3a;white-space:nowrap;">USD</div>
<div style="position:absolute;left:154.4px;top:448.29999999999995px;width:976.80px;height:1.00px;background:#f2f3f4"></div>
<div style="position:absolute;left:158.4px;top:453.70px;line-height:9.38px;font-size:8.4px;color:#3a3a3a;white-space:nowrap;">132754</div>
<div style="position:absolute;left:244.5px;top:453.70px;line-height:9.38px;font-size:8.4px;color:#3a3a3a;white-space:nowrap;">bonus in 50%</div>
<div style="position:absolute;left:353.9px;top:453.80px;width:33.3px;height:9.4px;background:#1d9d5c;border-radius:1.6px;color:#fff;font-weight:bold;font-size:6.3px;line-height:9.4px;text-align:center">approved</div>
<div style="position:absolute;left:573.7px;top:453.70px;line-height:9.38px;font-size:8.4px;color:#5e88b1;white-space:nowrap;">Standard 8018036</div>
<div style="position:absolute;left:671.6px;top:453.70px;line-height:9.38px;font-size:8.4px;color:#3a3a3a;white-space:nowrap;">2024-06-26 10:06:31</div>
<div style="position:absolute;left:859.2px;top:453.70px;line-height:9.38px;font-size:8.4px;color:#3a3a3a;white-space:nowrap;">174.50</div>
<div style="position:absolute;left:945.3px;top:453.70px;line-height:9.38px;font-size:8.4px;color:#3a3a3a;white-space:nowrap;">USD</div>
<div style="position:absolute;left:154.4px;top:466.5px;width:976.80px;height:1.00px;background:#f2f3f4"></div>
<div style="position:absolute;left:158.4px;top:471.90px;line-height:9.38px;font-size:8.4px;color:#3a3a3a;white-space:nowrap;">132745</div>
<div style="position:absolute;left:244.5px;top:471.90px;line-height:9.38px;font-size:8.4px;color:#3a3a3a;white-space:nowrap;">deposit</div>
<div style="position:absolute;left:353.9px;top:472.00px;width:33.3px;height:9.4px;background:#1d9d5c;border-radius:1.6px;color:#fff;font-weight:bold;font-size:6.3px;line-height:9.4px;text-align:center">approved</div>
<div style="position:absolute;left:464.5px;top:471.90px;line-height:9.38px;font-size:8.4px;color:#3a3a3a;white-space:nowrap;">SozaPay TRC20</div>
<div style="position:absolute;left:573.7px;top:471.90px;line-height:9.38px;font-size:8.4px;color:#5e88b1;white-space:nowrap;">Standard 8018036</div>
<div style="position:absolute;left:671.6px;top:471.90px;line-height:9.38px;font-size:8.4px;color:#3a3a3a;white-space:nowrap;">2024-06-26 09:55:08</div>
<div style="position:absolute;left:859.2px;top:471.90px;line-height:9.38px;font-size:8.4px;color:#3a3a3a;white-space:nowrap;">349.00</div>
<div style="position:absolute;left:945.3px;top:471.90px;line-height:9.38px;font-size:8.4px;color:#3a3a3a;white-space:nowrap;">USD</div>
<div style="position:absolute;left:154.4px;top:484.7px;width:976.80px;height:1.00px;background:#f2f3f4"></div>
<div style="position:absolute;left:158.4px;top:490.10px;line-height:9.38px;font-size:8.4px;color:#3a3a3a;white-space:nowrap;">132357</div>
<div style="position:absolute;left:244.5px;top:490.10px;line-height:9.38px;font-size:8.4px;color:#3a3a3a;white-space:nowrap;">deposit</div>
<div style="position:absolute;left:353.9px;top:490.20px;width:30.4px;height:9.4px;background:#d9493c;border-radius:1.6px;color:#fff;font-weight:bold;font-size:6.3px;line-height:9.4px;text-align:center">declined</div>
<div style="position:absolute;left:464.5px;top:490.10px;line-height:9.38px;font-size:8.4px;color:#3a3a3a;white-space:nowrap;">SozaPay TRC20</div>
<div style="position:absolute;left:573.7px;top:490.10px;line-height:9.38px;font-size:8.4px;color:#5e88b1;white-space:nowrap;">Standard 8018036</div>
<div style="position:absolute;left:671.6px;top:490.10px;line-height:9.38px;font-size:8.4px;color:#3a3a3a;white-space:nowrap;">2024-06-25 17:58:25</div>
<div style="position:absolute;left:859.2px;top:490.10px;line-height:9.38px;font-size:8.4px;color:#3a3a3a;white-space:nowrap;">5,000.00</div>
<div style="position:absolute;left:945.3px;top:490.10px;line-height:9.38px;font-size:8.4px;color:#3a3a3a;white-space:nowrap;">USDT</div>
<div style="position:absolute;left:1031.3px;top:490.10px;line-height:9.38px;font-size:8.4px;color:#3a3a3a;white-space:nowrap;">5</div>
<div style="position:absolute;left:138px;top:545px;width:1010.00px;height:27.00px;background:#fff"></div>
<div style="position:absolute;left:0px;top:572px;width:1151.00px;height:28.00px;background:linear-gradient(90deg,#e1dcdb 0%,#e6ddd6 13%,#e9dcd7 26%,#e8e0db 43%,#ebe1d6 55%,#eee2cc 66%,#ede1bf 74%,#e5e4c8 82%,#e0e3d3 90%,#e1e2d8 95%,#e8e4d2 100%);border-top:1px solid #d9d6d2"></div>
<svg style="position:absolute;left:342.9px;top:578.6px" width="14.8" height="14.8" viewBox="0 0 14.8 14.8"><defs><linearGradient id="wg" x1="0" y1="0" x2="1" y2="1"><stop offset="0" stop-color="#5ad0f8"/><stop offset="1" stop-color="#1a7fd8"/></linearGradient></defs><path d="M0 0H7V7H0ZM7.8 0H14.8V7H7.8ZM0 7.8H7V14.8H0ZM7.8 7.8H14.8V14.8H7.8Z" fill="url(#wg)"/></svg>
<div style="position:absolute;left:365.7px;top:577px;width:130.30px;height:18.00px;background:#f7f4e8;border:1px solid #e9e4d6;border-radius:9px"></div>
<svg style="position:absolute;left:372.3px;top:581.3px" width="9" height="9" viewBox="0 0 9 9"><circle cx="3.8" cy="3.8" r="3" fill="none" stroke="#222" stroke-width="1.1"/><path d="M6 6L8.5 8.5" stroke="#222" stroke-width="1.2"/></svg>
<div style="position:absolute;left:387.5px;top:582.20px;line-height:8.27px;font-size:7.4px;color:#555;white-space:nowrap;">Search</div>
<svg style="position:absolute;left:503.7px;top:578.5px" width="15.4" height="14" viewBox="0 0 15.4 14"><path d="M0 1.5Q0 .5 1 .5H5.5L7 2H14.4Q15.4 2 15.4 3V13Q15.4 14 14.4 14H1Q0 14 0 13Z" fill="#f5c342"/><rect x="0" y="5" width="15.4" height="9" rx="1" fill="#ffd766"/><rect x="3" y="9.5" width="9.4" height="3" fill="#2f7fd0"/></svg>
<svg style="position:absolute;left:530.7px;top:578.5px" width="14.8" height="14.4" viewBox="0 0 14.8 14.4"><path d="M0 5H14.8V13Q14.8 14.4 13.4 14.4H1.4Q0 14.4 0 13Z" fill="#8a5ce0"/><path d="M0 3L13.6 0L14.6 3.2L1 6Z" fill="#b584f4"/></svg>
<div style="position:absolute;left:553px;top:574.5px;width:22.00px;height:24.00px;background:rgba(255,255,255,.45);border-radius:3px"></div>
<svg style="position:absolute;left:556.5px;top:578.5px" width="15.4" height="15.4" viewBox="0 0 16 16"><circle cx="8" cy="8" r="7.5" fill="#db4437"/><path d="M8 8L1.5 4.2A7.5 7.5 0 0 0 4.3 14.5Z" fill="#0f9d58"/><path d="M8 8L4.3 14.5A7.5 7.5 0 0 0 15.5 8Z" fill="#f4b400"/><path d="M8 8L4.3 14.5L8 15.5A7.5 7.5 0 0 0 15.2 5.6Z" fill="#0f9d58" opacity="0"/><circle cx="8" cy="8" r="3.6" fill="#fff"/><circle cx="8" cy="8" r="2.8" fill="#4285f4"/></svg>
<div style="position:absolute;left:563.5px;top:575.6px;width:8.5px;height:8.5px;border-radius:50%;background:#7a8a9a;border:1px solid #c9cdd3"></div>
<div style="position:absolute;left:558.5px;top:596.8px;width:8.00px;height:1.40px;background:#2f6fd8;border-radius:1px"></div>
<svg style="position:absolute;left:583.5px;top:578.5px" width="15" height="15" viewBox="0 0 15 15"><circle cx="7.5" cy="7.3" r="6.2" fill="none" stroke="#237a46" stroke-width="1.5"/><path d="M1.2 14.2L2.2 10.6L4.6 12.6Z" fill="#237a46"/><path d="M5 4.6Q4.4 5.4 5 7Q6 9 8.2 10Q9.6 10.6 10.2 9.6L9.2 8.6L8.2 9Q6.8 8.4 6 7L6.4 6L5.6 4.6Z" fill="#237a46"/></svg>
<svg style="position:absolute;left:610.9px;top:580px" width="12.6" height="12.6" viewBox="0 0 12.6 12.6"><circle cx="6.3" cy="6.3" r="6.2" fill="#222"/><circle cx="6.3" cy="3.7" r="1.7" fill="none" stroke="#666" stroke-width=".6"/><circle cx="4" cy="7.7" r="1.7" fill="none" stroke="#666" stroke-width=".6"/><circle cx="8.6" cy="7.7" r="1.7" fill="none" stroke="#666" stroke-width=".6"/></svg>
<svg style="position:absolute;left:636.5px;top:579px" width="14" height="14" viewBox="0 0 14 14"><circle cx="7" cy="7" r="7" fill="#2fa4e0"/><path d="M2.8 6.9L10.6 3.8L9.3 10.6L6.6 8.6L5.4 9.8L5.6 7.9L9.4 4.9L4.9 7.6Z" fill="#fff"/></svg>
<svg style="position:absolute;left:663px;top:578.9px" width="14.2" height="14.2" viewBox="0 0 14.2 14.2"><rect width="14.2" height="14.2" rx="2.5" fill="#141414"/><path d="M2.3 4.5H6.3V10.3H4.4V6.2H2.3Z" fill="#fff"/><circle cx="7.6" cy="5.4" r="1" fill="#fff"/><path d="M9.2 4.5H11.8L9.6 10.3H7.2Z" fill="#fff"/></svg>
<svg style="position:absolute;left:689px;top:578.9px" width="14.3" height="14.3" viewBox="0 0 14.3 14.3"><rect width="14.3" height="14.3" fill="#fafafa"/><path d="M1.5 2.8H12.8" stroke="#e04a2a" stroke-width="1.4"/><path d="M2.6 4.2L7.15 12.4L11.7 4.2H9.6L7.15 8.8L4.7 4.2Z" fill="#1e6a70"/></svg>
<svg style="position:absolute;left:716.3px;top:578.5px" width="14.5" height="15" viewBox="0 0 14.5 15"><path d="M1 1L9 4V11L1 8Z" fill="#2a5ad8"/><path d="M1 8L9 11L12 9L4 6.5Z" fill="#6a98f0"/><circle cx="10.5" cy="11.5" r="3.2" fill="#b9c4d2"/><path d="M8.8 11.5A1.7 1.7 0 0 1 12.2 11.5" stroke="#4a6a8a" stroke-width=".8" fill="none"/></svg>
<svg style="position:absolute;left:742.4px;top:579.5px" width="13" height="13" viewBox="0 0 13 13"><rect width="13" height="13" rx="2" fill="#0b2040"/><text x="6.5" y="9" font-size="6.4" font-weight="bold" fill="#4aa8ff" text-anchor="middle" font-family="Liberation Sans">Ps</text></svg>
<svg style="position:absolute;left:768.5px;top:578.9px" width="14.1" height="14.1" viewBox="0 0 14.1 14.1"><rect width="14.1" height="14.1" rx="2.6" fill="#141414"/><path d="M4.3 5.8L7.05 3.1L9.8 5.8M4.3 8.3L7.05 11L9.8 8.3" fill="none" stroke="#e8b923" stroke-width="1.5"/><circle cx="2.6" cy="7.05" r=".9" fill="#e8b923"/><circle cx="11.5" cy="7.05" r=".9" fill="#e8b923"/><circle cx="7.05" cy="7.05" r="1" fill="#e8b923"/></svg>
<svg style="position:absolute;left:795.7px;top:579px" width="14" height="14" viewBox="0 0 14 14"><circle cx="7" cy="7" r="7" fill="#2fa4e0"/><path d="M2.8 6.9L10.6 3.8L9.3 10.6L6.6 8.6L5.4 9.8L5.6 7.9L9.4 4.9L4.9 7.6Z" fill="#fff"/></svg>
<svg style="position:absolute;left:947.3px;top:583.6px" width="7.6" height="4.8" viewBox="0 0 7.6 4.8"><path d="M.5 4.3L3.8 .8L7.1 4.3" fill="none" stroke="#333" stroke-width="1"/></svg>
<svg style="position:absolute;left:966px;top:580.5px" width="10.5" height="11" viewBox="0 0 10.5 11"><path d="M4.5 0L9 1.6V5Q9 8.6 4.5 10.4Q0 8.6 0 5V1.6Z" fill="#3a7fd0"/><circle cx="7.6" cy="8" r="2.8" fill="#2ea84a"/><path d="M6.3 8L7.3 9L9 7" stroke="#fff" stroke-width=".8" fill="none"/></svg>
<svg style="position:absolute;left:984.5px;top:580.5px" width="10.5" height="10.5" viewBox="0 0 10.5 10.5"><rect width="10.5" height="10.5" fill="#1b1b1b"/><path d="M2.5 6Q4 3 7.8 4.5Q5 4 3.6 6.2Q5.5 8 7.8 6.2" fill="none" stroke="#76b900" stroke-width="1"/></svg>
<div style="position:absolute;left:1005.2px;top:578.49px;line-height:6.93px;font-size:6.2px;color:#222;white-space:nowrap;">ENG</div>
<div style="position:absolute;left:1008.5px;top:587.69px;line-height:6.93px;font-size:6.2px;color:#222;white-space:nowrap;">IN</div>
<svg style="position:absolute;left:1029.3px;top:580.5px" width="24" height="11" viewBox="0 0 24 11"><rect x=".5" y=".5" width="9" height="7" rx=".8" fill="none" stroke="#333" stroke-width=".9"/><path d="M3 10H7M5 7.6V10" stroke="#333" stroke-width=".9"/><rect x="8.4" y="4" width="3" height="5" fill="#efe8d6" stroke="#333" stroke-width=".8"/><path d="M15 3.8H16.6L18.6 1.8V9.2L16.6 7.2H15Z" fill="none" stroke="#333" stroke-width=".9"/><path d="M20.2 3.4Q21.2 5.5 20.2 7.6M21.8 2.4Q23.3 5.5 21.8 8.6" fill="none" stroke="#333" stroke-width=".8"/></svg>
<div style="position:absolute;left:1071.3px;top:578.03px;line-height:7.37px;font-size:6.6px;color:#222;white-space:nowrap;">11:25 AM</div>
<div style="position:absolute;left:1064.6px;top:587.23px;line-height:7.37px;font-size:6.6px;color:#222;white-space:nowrap;">21-09-2024</div>
<svg style="position:absolute;left:1106.4px;top:580.2px" width="9.2" height="11" viewBox="0 0 9.2 11"><path d="M4.6 .5Q8 .8 8 4.5V7.5L9 9H.2L1.2 7.5V4.5Q1.2 .8 4.6 .5Z" fill="#1f5fc8"/><circle cx="4.6" cy="10" r="1.1" fill="#1f5fc8"/></svg>
<svg style="position:absolute;left:1124.7px;top:578px" width="16" height="17" viewBox="0 0 16 17"><path d="M3 1H9L7 14H1Q0 14 .5 12.5Z" fill="#3aa0f0"/><path d="M7 3H13Q15.5 3 15 5.5L13 15H7Z" fill="#f06ab8"/><path d="M4 6H11L9.5 14H2.5Z" fill="#a56cf0"/><rect x="8" y="11" width="8" height="6" rx="1" fill="#f5c842"/><text x="12" y="15.8" font-size="3.6" font-weight="bold" fill="#333" text-anchor="middle" font-family="Liberation Sans">PRE</text></svg>
<div style="position:absolute;left:1044.7px;top:554.47px;line-height:6.09px;font-size:5.45px;color:#8a8a8a;white-space:nowrap;">Powered By <u>FXBackOffice</u> © 2024 All rights</div>
<svg style="position:absolute;left:1104px;top:520px" width="47" height="46" viewBox="1104 520 47 46"><circle cx="1125.8" cy="543.9" r="17.8" fill="#000"/><circle cx="1140.3" cy="529.6" r="5.9" fill="#000"/><circle cx="1140.3" cy="529.6" r="4.6" fill="#e9788b"/><circle cx="1140.3" cy="529.6" r="1.3" fill="#7a1f2e"/><path d="M1120.8 538H1131.3Q1133 538 1133 539.7V546.6Q1133 548.3 1131.3 548.3H1127.6L1124.4 551.3V548.3H1120.8Q1119.1 548.3 1119.1 546.6V539.7Q1119.1 538 1120.8 538Z" fill="none" stroke="#fff" stroke-width="2.4" stroke-linejoin="round"/></svg>
<div id="sb" class="abs"></div><div id="sbt" class="abs"></div>
</body></html>
